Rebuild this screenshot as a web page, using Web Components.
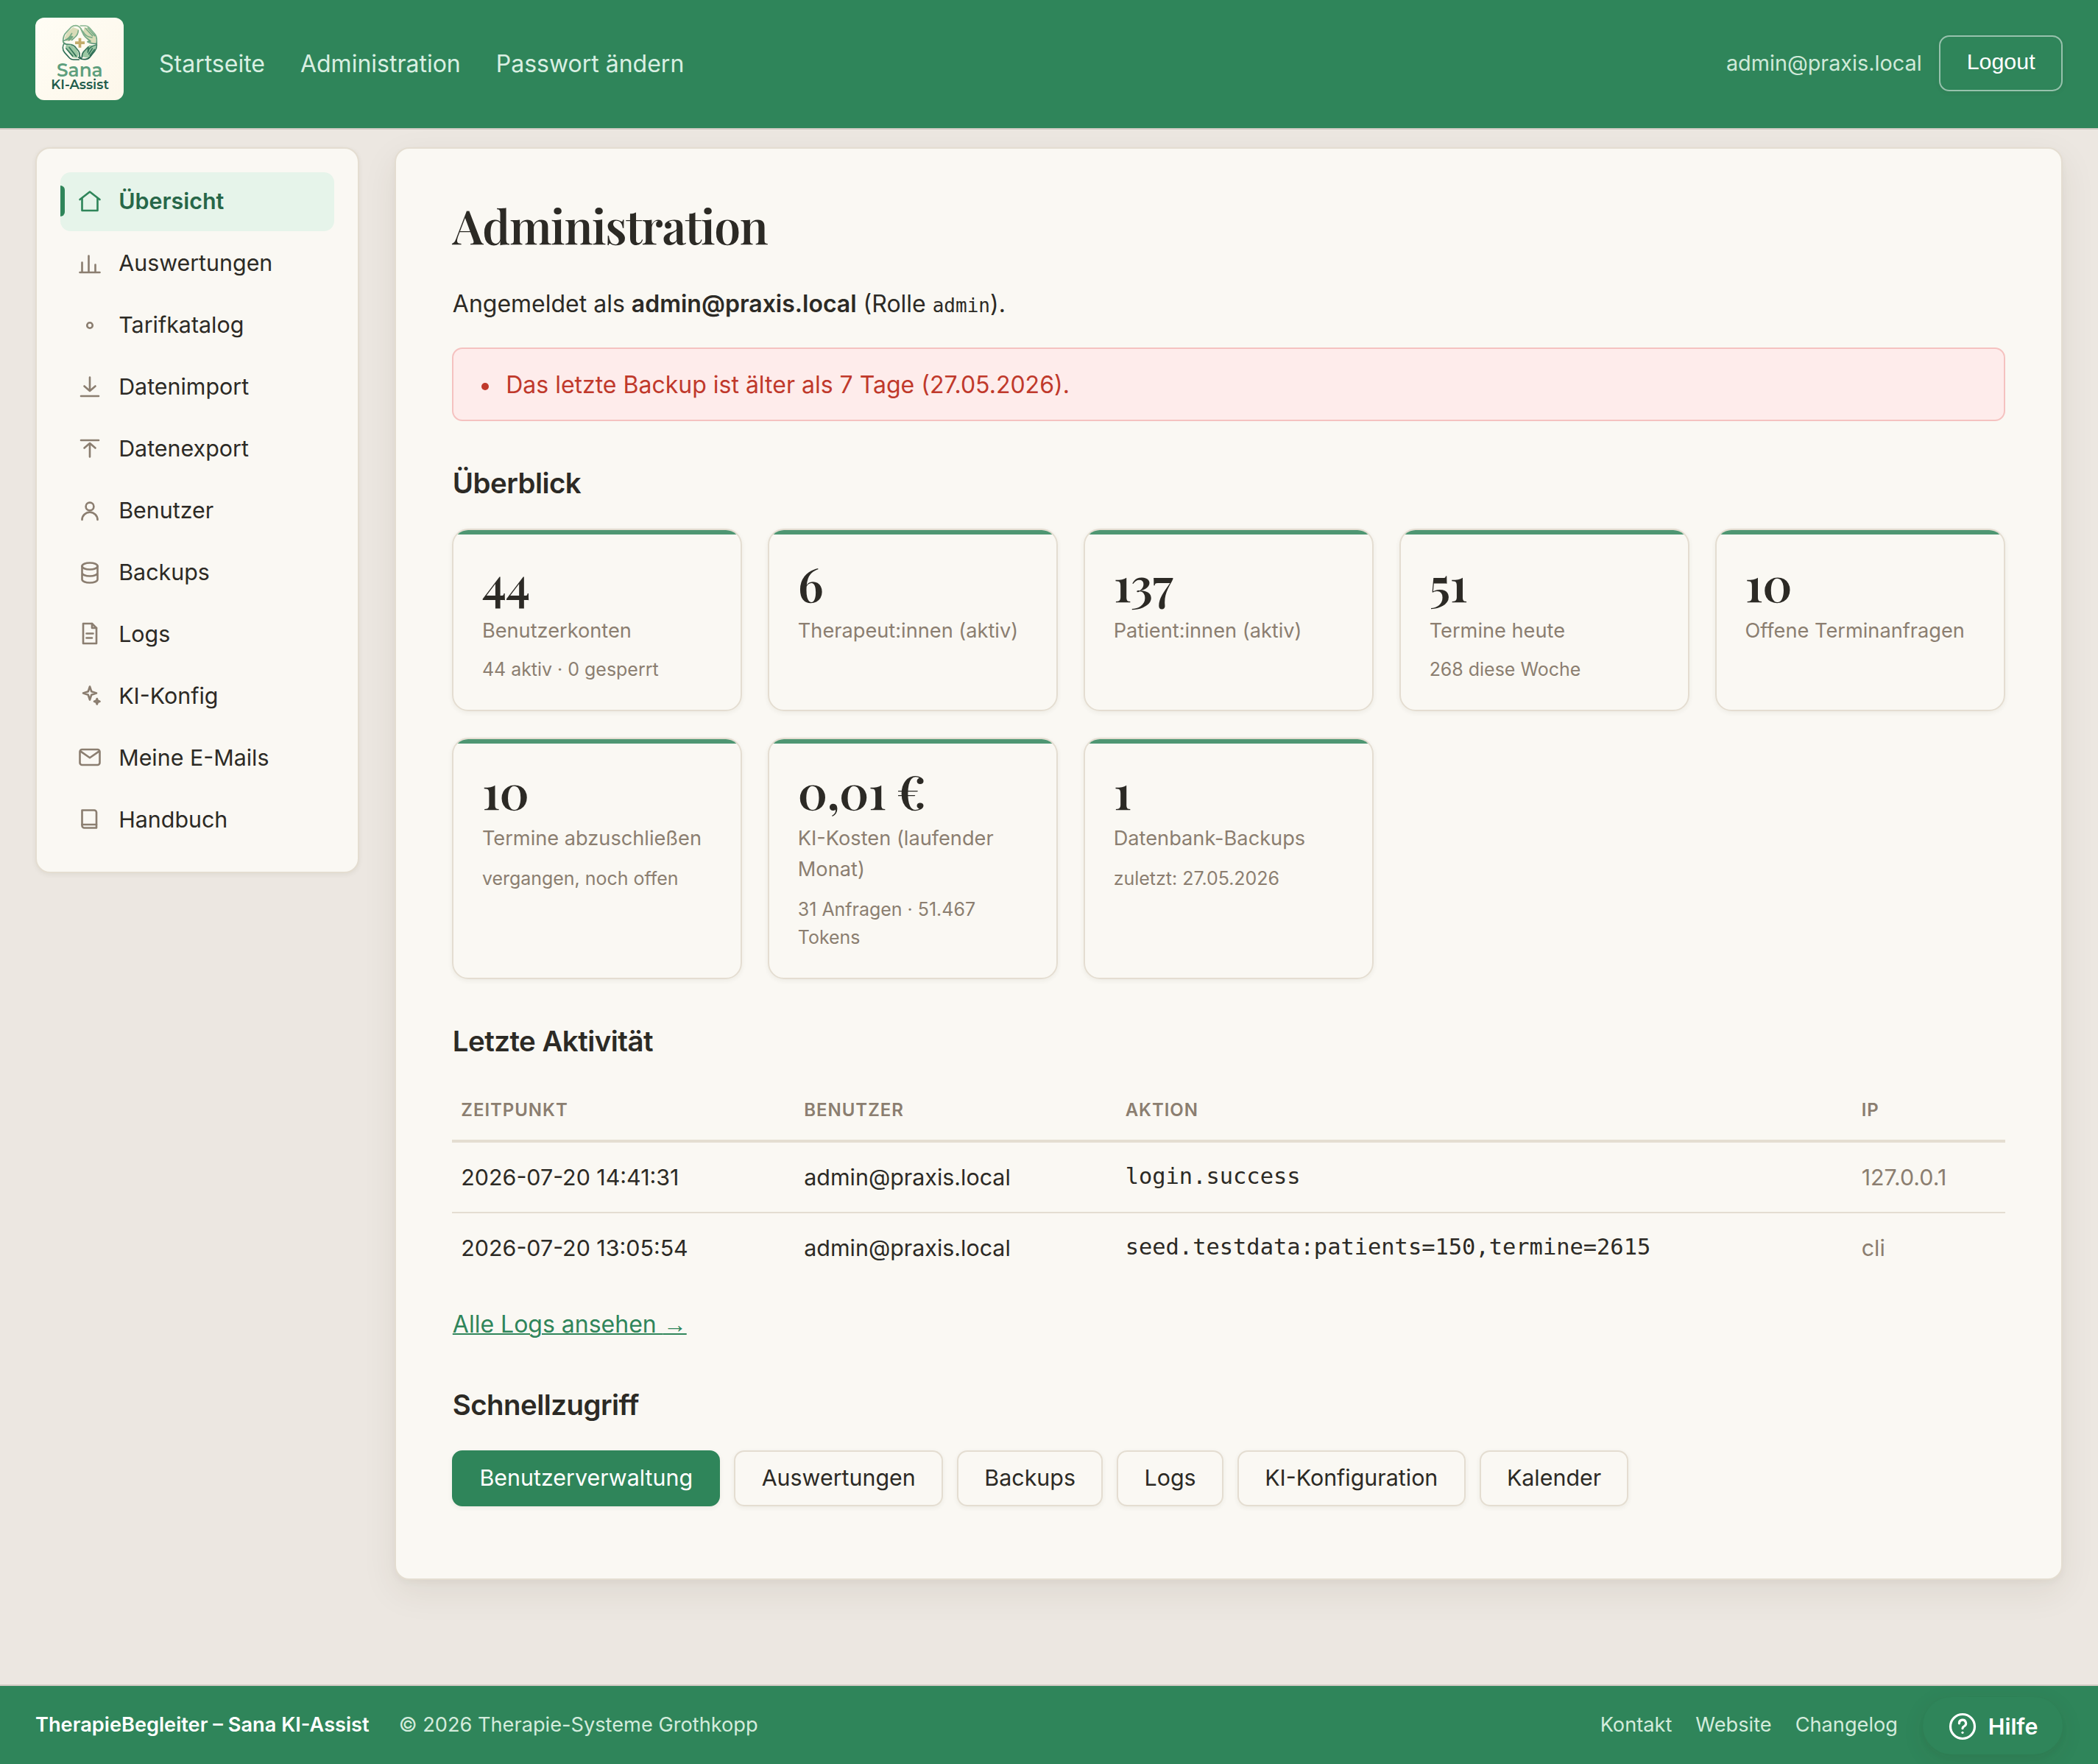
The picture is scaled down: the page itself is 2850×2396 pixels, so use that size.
<!DOCTYPE html>
<html lang="de">
<head>
<meta charset="utf-8">
<title>Administration – TherapieBegleiter</title>
<style>
  :root {
    --green: #2f855a;
    --green-dark: #276749;
    --green-soft: #e6f4ea;
    --bg: #ece7e1;
    --surface: #faf8f3;
    --line: #e4ddd1;
    --ink: #2c2a25;
    --muted: #8b7e70;
    --serif: "Playfair Display", "Liberation Serif", serif;
    --mono: "DejaVu Sans Mono", monospace;
    --shadow-sm: 0 2px 6px rgba(60, 50, 35, 0.07);
  }
  html, body { height: 100%; }
  body {
    margin: 0;
    display: flex;
    flex-direction: column;
    background: var(--bg);
    color: var(--ink);
    font: 32px/1.7 Inter, "Liberation Sans", sans-serif;
  }
  main {
    flex: 1;
    display: grid;
    grid-template-columns: 440px 1fr;
    gap: 48px;
    align-items: start;
    padding: 24px 48px 0;
  }
  h1 {
    margin: 0 0 50.8px;
    font: 600 64px/56.8px var(--serif);
    letter-spacing: -1.36px;
  }
  h2 {
    margin: 59px 0 37px;
    font-size: 38.4px;
    line-height: 50px;
    font-weight: 600;
    letter-spacing: -0.0135em;
  }
  p { margin: 0; }
  p strong { font-weight: 600; }
  p code { font: 26px var(--mono); }
  .stats { display: grid; grid-template-columns: repeat(5, 1fr); gap: 36px 35.2px; margin: 0 -0.5px; }
  .more { margin: 29.6px 0 -2px; }
  .more a { color: var(--green); text-decoration-thickness: 2px; }
  .more span { font-family: "Liberation Sans", sans-serif; }
  .quick { display: flex; gap: 19.2px; margin-left: -0.5px; }
</style>
</head>
<body>

<app-header user="admin@praxis.local">
  <a>Startseite</a>
  <a>Administration</a>
  <a>Passwort ändern</a>
</app-header>

<main>
  <side-nav>
    <side-item icon="home" active>Übersicht</side-item>
    <side-item icon="chart">Auswertungen</side-item>
    <side-item icon="dot">Tarifkatalog</side-item>
    <side-item icon="import">Datenimport</side-item>
    <side-item icon="export">Datenexport</side-item>
    <side-item icon="user">Benutzer</side-item>
    <side-item icon="database">Backups</side-item>
    <side-item icon="file">Logs</side-item>
    <side-item icon="sparkle">KI-Konfig</side-item>
    <side-item icon="mail">Meine E-Mails</side-item>
    <side-item icon="book">Handbuch</side-item>
  </side-nav>

  <page-panel>
    <h1>Administration</h1>
    <p>Angemeldet als <strong>admin@praxis.local</strong> (Rolle <code>admin</code>).</p>
    <alert-box>Das letzte Backup ist älter als 7 Tage (27.05.2026).</alert-box>

    <h2>Überblick</h2>
    <div class="stats">
      <stat-card value="44" label="Benutzerkonten">44 aktiv · 0 gesperrt</stat-card>
      <stat-card value="6" label="Therapeut:innen (aktiv)"></stat-card>
      <stat-card value="137" label="Patient:innen (aktiv)"></stat-card>
      <stat-card value="51" label="Termine heute">268 diese Woche</stat-card>
      <stat-card value="10" label="Offene Terminanfragen"></stat-card>
      <stat-card class="low" value="10" label="Termine abzuschließen">vergangen, noch offen</stat-card>
      <stat-card class="low" value="0,01 €" label="KI-Kosten (laufender Monat)">31 Anfragen · 51.467 Tokens</stat-card>
      <stat-card class="low" value="1" label="Datenbank-Backups">zuletzt: 27.05.2026</stat-card>
    </div>

    <h2>Letzte Aktivität</h2>
    <activity-table>
      <activity-row time="2026-07-20 14:41:31" user="admin@praxis.local" ip="127.0.0.1">login.success</activity-row>
      <activity-row time="2026-07-20 13:05:54" user="admin@praxis.local" ip="cli">seed.testdata:patients=150,termine=2615</activity-row>
    </activity-table>
    <p class="more"><a href="#">Alle Logs ansehen <span>→</span></a></p>

    <h2>Schnellzugriff</h2>
    <div class="quick">
      <quick-button primary>Benutzerverwaltung</quick-button>
      <quick-button>Auswertungen</quick-button>
      <quick-button>Backups</quick-button>
      <quick-button>Logs</quick-button>
      <quick-button>KI-Konfiguration</quick-button>
      <quick-button>Kalender</quick-button>
    </div>
  </page-panel>
</main>

<app-footer>
  <strong slot="brand">TherapieBegleiter – Sana KI-Assist</strong>
  <span slot="brand">© 2026 Therapie-Systeme Grothkopp</span>
  <a>Kontakt</a>
  <a>Website</a>
  <a>Changelog</a>
  <help-button slot="help">Hilfe</help-button>
</app-footer>

<script>
const ICONS = {
  home: '<path d="M3 10l9-7 9 7"/><path d="M5 9v11h14V9"/>',
  chart: '<path d="M3 20h18M5 20v-9M11 20V5M17 20v-7"/>',
  dot: '<circle cx="12" cy="12" r="2.5"/>',
  import: '<path d="M12 3v12M7 11l5 4.3 5-4.3M4 20h16"/>',
  export: '<path d="M12 19V7M7 11l5-4.3 5 4.3M4 4h16"/>',
  user: '<circle cx="12" cy="8" r="3.6"/><path d="M5 20a7 6.8 0 0 1 14 0"/>',
  database: '<ellipse cx="12" cy="6" rx="7" ry="3"/><path d="M5 6v12c0 1.66 3.13 3 7 3s7-1.34 7-3V6M5 12c0 1.66 3.13 3 7 3s7-1.34 7-3"/>',
  file: '<path d="M6 2h8l4 4v14H6z"/><path d="M14 2v4h4M9 11h6M9 15h5"/>',
  sparkle: '<path d="M12 3l1.5 4.5L18 9l-4.5 1.5L12 15l-1.5-4.5L6 9l4.5-1.5z"/><path d="M18.5 14l.7 1.8 1.8.7-1.8.7-.7 1.8-.7-1.8-1.8-.7 1.8-.7z"/>',
  mail: '<rect x="3" y="4" width="18" height="14" rx="2"/><path d="M3.5 5.6L12 11.5l8.5-5.9"/>',
  book: '<path d="M5 3h11a2 2 0 0 1 2 2v14H7a2 2 0 0 1-2-2z"/><path d="M5 16h13"/>',
  help: '<circle cx="12" cy="12" r="9"/><path d="M9.5 9.7a2.5 2.5 0 1 1 3.6 2.2c-.7.35-1.1.8-1.1 1.6"/><path d="M12 16.5v.05"/>'
};

class UiIcon extends HTMLElement {
  connectedCallback() {
    this.attachShadow({ mode: 'open' });
    this.shadowRoot.innerHTML = `
      <style>
        :host { display: block; width: 36px; height: 36px; flex: none; }
        svg {
          display: block;
          width: 100%;
          height: 100%;
          fill: none;
          stroke: currentColor;
          stroke-width: 1.75;
          stroke-linecap: round;
          stroke-linejoin: round;
        }
      </style>
      <svg viewBox="0 0 24 24">${ICONS[this.getAttribute('name')]}</svg>
    `;
  }
}
customElements.define('ui-icon', UiIcon);

class BrandLogo extends HTMLElement {
  constructor() {
    super();
    this.attachShadow({ mode: 'open' });
    this.shadowRoot.innerHTML = `
      <style>
        :host {
          display: block;
          width: 120px;
          height: 112px;
          border-radius: 12px;
          overflow: hidden;
          background: linear-gradient(135deg, #fffdf5, #fdf7ea);
        }
        svg { display: block; }
        text { font-family: Montserrat, Inter, sans-serif; font-weight: 600; }
      </style>
      <svg width="120" height="112" viewBox="54 42 360 336">
        <defs>
          <linearGradient id="ring" gradientUnits="userSpaceOnUse" x1="235" y1="72" x2="235" y2="216">
            <stop offset="0" stop-color="#8bb892"/>
            <stop offset=".45" stop-color="#6ba37f"/>
            <stop offset=".6" stop-color="#3f7f63"/>
            <stop offset="1" stop-color="#22604c"/>
          </linearGradient>
        </defs>
        <g stroke="none">
          <path fill="#d9dcb8" d="M172 126l12-24 24-21 22 8-2 18-18 16-10 12-16 4z"/>
          <path fill="#d9dcb8" d="M254 80l16 6 30 30 2 30-28-2-14-22-12-16z"/>
          <path fill="#9cc8a4" d="M180 152l22 4 20 14 8 18-4 18-20-2-30-38z"/>
          <path fill="#9cc8a4" d="M300 156l-2 24-26 26-26-4-2-16 18-16 12-16z"/>
        </g>
        <g fill="none" stroke="url(#ring)" stroke-width="5" stroke-linecap="round" stroke-linejoin="round">
          <path d="M167 137q0-22 14-36l20-21q7-6 18-6 14 1 22 15l14 20q6 8 17 11l13 3"/>
          <path d="M238 75h20q9 0 16 8l22 25q8 9 8 24v24q0 12-8 22l-20 25q-8 9-20 9-18 0-26-8"/>
          <path d="M172 146q-6 8-6 18 0 12 8 21l20 22q6 6 16 6h22"/>
          <path d="M167 137q22-8 30-22l6-9M178 134q14-4 24-16M190 134q8-3 16-14M203 133l14-13q11-10 12-26"/>
          <path d="M303 148q-22 0-36-8l12-2-20-16q-9-8-14-22l-6-14M259 86l28 30M268 84l28 32"/>
          <path d="M167 140q6 12 18 10l15 2q14 4 20 14l10 12q5 7 4 18-1 8 8 12M180 168l26 30M192 163l28 36"/>
          <path d="M302 153q-20 4-30 18l-4 12 2-22-14 14q-12 10-12 28M286 168l-14 22M295 172l-18 24"/>
        </g>
        <path fill="#c3ac6b" d="M230 125h11v14h14v11h-14v14h-11v-14h-14v-11h14z"/>
        <text x="141" y="282" font-size="76" textLength="188" lengthAdjust="spacingAndGlyphs" fill="#5f9f7d">Sana</text>
        <text x="118" y="334" font-size="54" textLength="236" lengthAdjust="spacingAndGlyphs" fill="#205c4b">KI-Assist</text>
      </svg>
    `;
  }
}
customElements.define('brand-logo', BrandLogo);

class AppHeader extends HTMLElement {
  constructor() {
    super();
    this.attachShadow({ mode: 'open' });
    this.shadowRoot.innerHTML = `
      <style>
        :host {
          display: flex;
          align-items: center;
          box-sizing: border-box;
          height: 176px;
          padding: 24px 48px;
          border-bottom: 2px solid #cfcac2;
          background: var(--green);
        }
        brand-logo { align-self: flex-start; margin-right: 48px; }
        nav { display: flex; gap: 48px; color: #d9efe2; line-height: 52px; }
        .user { margin-left: auto; padding-bottom: 1px; font-size: 28.8px; color: #cfe9d9; }
        button {
          margin: 0 0 2px 23.6px;
          height: 76px;
          padding: 0 35.4px 5px;
          border: 2px solid rgba(255, 255, 255, 0.5);
          border-radius: 14px;
          background: transparent;
          box-shadow: var(--shadow-sm);
          color: #fff;
          font: 30.4px "Liberation Sans", sans-serif;
        }
      </style>
      <brand-logo></brand-logo>
      <nav><slot></slot></nav>
      <span class="user"></span>
      <button>Logout</button>
    `;
  }

  connectedCallback() {
    this.shadowRoot.querySelector('.user').textContent = this.getAttribute('user');
  }
}
customElements.define('app-header', AppHeader);

class SideNav extends HTMLElement {
  constructor() {
    super();
    this.attachShadow({ mode: 'open' });
    this.shadowRoot.innerHTML = `
      <style>
        :host {
          display: flex;
          flex-direction: column;
          gap: 4px;
          padding: 32px 32px 30px;
          border: 2px solid var(--line);
          border-radius: 20px;
          background: var(--surface);
          box-shadow: var(--shadow-sm);
        }
      </style>
      <slot></slot>
    `;
  }
}
customElements.define('side-nav', SideNav);

class SideItem extends HTMLElement {
  connectedCallback() {
    this.attachShadow({ mode: 'open' });
    this.shadowRoot.innerHTML = `
      <style>
        :host {
          display: flex;
          align-items: center;
          gap: 21.2px;
          position: relative;
          box-sizing: border-box;
          height: 80px;
          padding-left: 22px;
          border-radius: 14px;
          font-size: 30.4px;
          line-height: 52px;
        }
        :host([active]) { background: var(--green-soft); color: var(--green-dark); font-weight: 600; }
        ui-icon { color: var(--muted); }
        span { padding-bottom: 2px; }
        :host([active]) ui-icon { color: var(--green); }
        /* marker on the left edge of the current page */
        :host([active])::before {
          content: "";
          position: absolute;
          left: 0;
          top: 18px;
          width: 6px;
          height: 42px;
          border-radius: 0 6px 6px 0;
          background: var(--green);
        }
      </style>
      <ui-icon name="${this.getAttribute('icon')}"></ui-icon>
      <span><slot></slot></span>
    `;
  }
}
customElements.define('side-item', SideItem);

class PagePanel extends HTMLElement {
  constructor() {
    super();
    this.attachShadow({ mode: 'open' });
    this.shadowRoot.innerHTML = `
      <style>
        :host {
          display: block;
          box-sizing: border-box;
          height: 1946px;
          padding: 76px 76.8px;
          border: 2px solid var(--line);
          border-radius: 20px;
          background: var(--surface);
          box-shadow: 0 16px 48px rgba(60, 45, 20, 0.08), 0 4px 8px rgba(60, 45, 20, 0.04);
        }
      </style>
      <slot></slot>
    `;
  }
}
customElements.define('page-panel', PagePanel);

class AlertBox extends HTMLElement {
  constructor() {
    super();
    this.attachShadow({ mode: 'open' });
    this.shadowRoot.innerHTML = `
      <style>
        :host {
          display: block;
          box-sizing: border-box;
          height: 100px;
          margin: 32px -0.5px 0;
          padding: 21.6px 32px 20px;
          border: 2px solid #f5c2c0;
          border-radius: 14px;
          background: #feeceb;
          color: #c0392b;
        }
        ul { margin: 0; padding-left: 38.9px; list-style: none; }
        li { position: relative; }
        li::before {
          content: "";
          position: absolute;
          left: -33px;
          top: 24px;
          width: 10px;
          height: 10px;
          border-radius: 50%;
          background: currentColor;
        }
      </style>
      <ul><li><slot></slot></li></ul>
    `;
  }
}
customElements.define('alert-box', AlertBox);

class StatCard extends HTMLElement {
  constructor() {
    super();
    this.attachShadow({ mode: 'open' });
  }

  connectedCallback() {
    this.shadowRoot.innerHTML = `
      <style>
        :host {
          display: block;
          position: relative;
          overflow: hidden;
          box-sizing: border-box;
          padding: 38px 38.6px 35.6px;
          border: 2px solid var(--line);
          border-radius: 22px;
          box-shadow: var(--shadow-sm);
          color: var(--muted);
        }
        :host(.low) { padding-bottom: 35.2px; }
        :host::before {
          content: "";
          position: absolute;
          inset: 0 0 auto;
          height: 6px;
          background: var(--green);
          opacity: 0.85;
        }
        .value {
          height: 78px;
          font: 600 64px/68px var(--serif);
          letter-spacing: -0.01em;
          color: var(--ink);
        }
        :host(.low) .value { height: 76px; line-height: 64px; }
        .label { font-size: 27.2px; line-height: 42px; }
        .sub { margin-top: 12px; font-size: 24.96px; line-height: 38.4px; }
        :host(.low) .sub { margin-top: 14px; }
      </style>
      <div class="value">${this.getAttribute('value')}</div>
      <div class="label">${this.getAttribute('label')}</div>
      <div class="sub"><slot></slot></div>
    `;
  }
}
customElements.define('stat-card', StatCard);

class ActivityTable extends HTMLElement {
  constructor() {
    super();
    this.attachShadow({ mode: 'open' });
    this.shadowRoot.innerHTML = `
      <style>
        :host { display: block; margin: -10px -0.5px 0; --cols: 466px 436.4px 1000px 1fr; }
        .head {
          display: grid;
          grid-template-columns: var(--cols);
          border-bottom: 4px solid var(--line);
          color: var(--muted);
          font-size: 24px;
          font-weight: 600;
          letter-spacing: 0.04em;
          line-height: 80px;
          padding-top: 2px;
        }
        .head span { padding: 0 12px; }
      </style>
      <div class="head"><span>ZEITPUNKT</span><span>BENUTZER</span><span>AKTION</span><span>IP</span></div>
      <slot></slot>
    `;
  }
}
customElements.define('activity-table', ActivityTable);

class ActivityRow extends HTMLElement {
  connectedCallback() {
    this.attachShadow({ mode: 'open' });
    this.shadowRoot.innerHTML = `
      <style>
        :host {
          display: grid;
          grid-template-columns: var(--cols);
          border-bottom: 2px solid var(--line);
          font-size: 30.4px;
          line-height: 94px;
        }
        :host(:last-child) { border-bottom: 0; }
        span, code { padding: 0 12px; }
        code { font-family: var(--mono); line-height: 92px; }
        .ip { color: var(--muted); }
      </style>
      <span>${this.getAttribute('time')}</span>
      <span>${this.getAttribute('user')}</span>
      <code><slot></slot></code>
      <span class="ip">${this.getAttribute('ip')}</span>
    `;
  }
}
customElements.define('activity-row', ActivityRow);

class QuickButton extends HTMLElement {
  constructor() {
    super();
    this.attachShadow({ mode: 'open' });
    this.shadowRoot.innerHTML = `
      <style>
        :host {
          display: block;
          padding: 0 35.2px 2px;
          border: 2px solid var(--line);
          border-radius: 14px;
          box-shadow: var(--shadow-sm);
          font-size: 30.4px;
          line-height: 70px;
          cursor: pointer;
        }
        :host([primary]) { background: var(--green); border-color: var(--green); color: #fff; }
      </style>
      <slot></slot>
    `;
  }
}
customElements.define('quick-button', QuickButton);

class HelpButton extends HTMLElement {
  constructor() {
    super();
    this.attachShadow({ mode: 'open' });
    this.shadowRoot.innerHTML = `
      <style>
        :host {
          display: flex;
          align-items: center;
          gap: 12.8px;
          box-sizing: border-box;
          width: 190px;
          height: 78px;
          padding: 1px 0 0 32px;
          border-radius: 39px;
          background: var(--green);
          box-shadow: 0 8px 32px rgba(60, 45, 20, 0.08), 0 4px 8px rgba(60, 45, 20, 0.04);
          color: #fff;
          font-size: 30.4px;
          font-weight: 600;
        }
        ui-icon { width: 44px; height: 44px; }
      </style>
      <ui-icon name="help"></ui-icon>
      <slot></slot>
    `;
  }
}
customElements.define('help-button', HelpButton);

class AppFooter extends HTMLElement {
  constructor() {
    super();
    this.attachShadow({ mode: 'open' });
    this.shadowRoot.innerHTML = `
      <style>
        :host {
          display: flex;
          align-items: center;
          justify-content: space-between;
          box-sizing: border-box;
          height: 108px;
          padding: 0 48px;
          border-top: 2px solid #cfcac2;
          background: var(--green);
          color: #d3ebdc;
          font-size: 27.2px;
          line-height: 46px;
        }
        div { display: flex; align-items: center; }
        .brand { gap: 40px; }
        .links { gap: 32px; }
        ::slotted(strong) { color: #fff; font-weight: 600; }
        ::slotted(help-button) { margin: 2px 0 0 2px; }
      </style>
      <div class="brand"><slot name="brand"></slot></div>
      <div class="links"><slot></slot><slot name="help"></slot></div>
    `;
  }
}
customElements.define('app-footer', AppFooter);
</script>
</body>
</html>
